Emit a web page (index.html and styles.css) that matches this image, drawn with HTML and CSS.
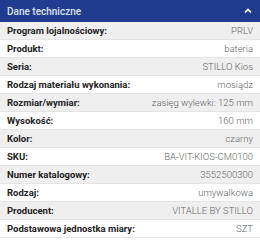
FILE: index.html
```html
<!DOCTYPE html>
<html lang="pl">
<head>
<meta charset="utf-8">
<link rel="stylesheet" href="styles.css">
</head>
<body>
<section class="panel">
  <header class="panel-head">
    <span class="panel-title">Dane techniczne</span>
    <svg class="chev" width="8" height="6" viewBox="0 0 8 6"><path d="M1 4.5 L4 1.5 L7 4.5" fill="none" stroke="#fff" stroke-width="1.6"/></svg>
  </header>
  <div class="rows">
    <div class="row"><span class="label">Program lojalnościowy:</span><span class="value">PRLV</span></div>
    <div class="row"><span class="label">Produkt:</span><span class="value">bateria</span></div>
    <div class="row"><span class="label">Seria:</span><span class="value">STILLO Kios</span></div>
    <div class="row"><span class="label">Rodzaj materiału wykonania:</span><span class="value">mosiądz</span></div>
    <div class="row"><span class="label">Rozmiar/wymiar:</span><span class="value">zasięg wylewki: 125 mm</span></div>
    <div class="row"><span class="label">Wysokość:</span><span class="value">160 mm</span></div>
    <div class="row"><span class="label">Kolor:</span><span class="value">czarny</span></div>
    <div class="row"><span class="label">SKU:</span><span class="value">BA-VIT-KIOS-CM0100</span></div>
    <div class="row"><span class="label">Numer katalogowy:</span><span class="value">3552500300</span></div>
    <div class="row"><span class="label">Rodzaj:</span><span class="value">umywalkowa</span></div>
    <div class="row"><span class="label">Producent:</span><span class="value">VITALLE BY STILLO</span></div>
    <div class="row"><span class="label">Podstawowa jednostka miary:</span><span class="value">SZT</span></div>
  </div>
</section>
</body>
</html>
```
FILE: styles.css
```css
html, body {
  margin: 0;
  padding: 0;
  background: #fff;
}
body {
  font-family: Roboto, "Noto Sans", sans-serif;
}
.panel {
  width: 260px;
}
.panel-head {
  height: 22px;
  background: #213b8f;
  display: flex;
  align-items: center;
  justify-content: space-between;
  padding: 0 7px;
}
.panel-title {
  color: #dfe4f2;
  font-size: 10px;
  font-weight: 500;
}
.chev {
  display: block;
  margin-right: 1px;
}
.row {
  height: 18px;
  box-sizing: border-box;
  display: flex;
  align-items: center;
  justify-content: space-between;
  padding: 0 7px;
  border-bottom: 1px solid #e4e4e4;
  background: #fff;
}
.row:nth-child(odd) {
  background: #efefef;
}
.label {
  color: #222;
  font-size: 9.5px;
  font-weight: 700;
}
.value {
  color: #666;
  font-size: 9.5px;
  font-weight: 300;
}
```
